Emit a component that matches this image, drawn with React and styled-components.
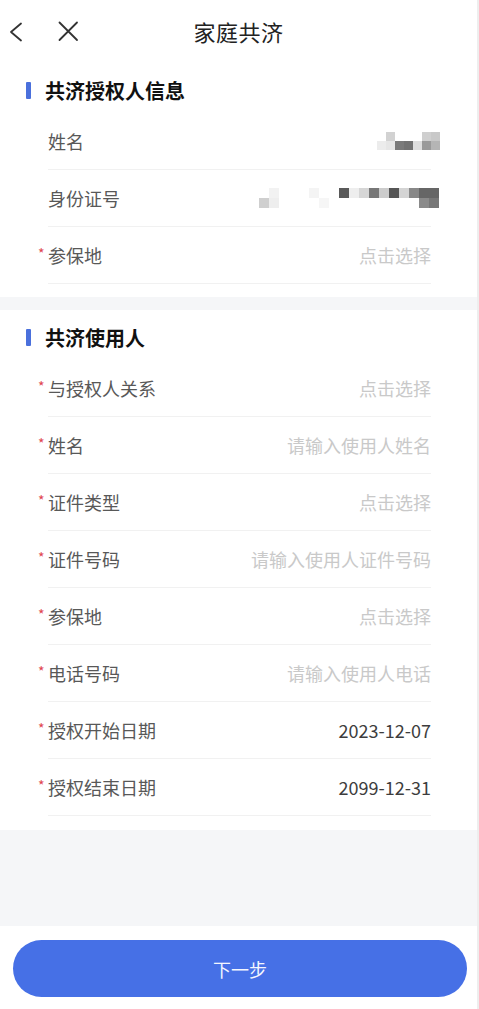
import React from 'react';
import styled, { createGlobalStyle } from 'styled-components';

const GlobalStyle = createGlobalStyle`
  body {
    margin: 0;
    background: #ffffff;
    font-family: "Noto Sans CJK SC", "Noto Sans", sans-serif;
  }
`;

const Page = styled.div`
  width: 479px;
  height: 1009px;
  box-sizing: border-box;
  border-right: 2px solid #eeeeee;
  display: flex;
  flex-direction: column;
  background: #ffffff;
  overflow: hidden;
`;

const Header = styled.div`
  height: 62px;
  display: grid;
  grid-template-columns: 1fr auto 1fr;
  align-items: center;
`;

const HeaderIcons = styled.div`
  display: flex;
  align-items: center;
  gap: 28px;
  padding-left: 4px;
  color: #333333;
`;

const Title = styled.div`
  font-size: 22px;
  color: #222222;
  letter-spacing: 0.5px;
`;

const Section = styled.div`
  background: #ffffff;
  padding-bottom: ${props => props.$bottom}px;
`;

const SectionTitle = styled.div`
  height: ${props => props.$h}px;
  box-sizing: border-box;
  padding-top: ${props => props.$top}px;
  display: flex;
  align-items: center;
  gap: 14px;
  padding-left: 26px;
  font-size: 20px;
  font-weight: 700;
  color: #111111;
`;

const Bar = styled.span`
  width: 5px;
  height: 17px;
  background: #4a70dc;
  border-radius: 1px;
`;

const Row = styled.div`
  height: 57px;
  box-sizing: border-box;
  margin: 0 46px 0 48px;
  border-bottom: 1px solid #f1f1f1;
  display: flex;
  align-items: center;
  justify-content: space-between;
`;

const Label = styled.div`
  font-size: 18px;
  color: #585858;
  display: flex;
  align-items: center;
`;

const Star = styled.span`
  width: 10px;
  margin-left: -10px;
  color: #e0454f;
  font-size: 14px;
  align-self: flex-start;
  margin-top: 1px;
`;

const Value = styled.div`
  font-size: 18px;
  color: ${props => (props.$placeholder ? '#c9c9c9' : '#3d3d3d')};
`;

const Gap = styled.div`
  height: ${props => props.$h}px;
  background: #f5f6f8;
`;

const Mosaic = styled.div`
  display: grid;
  grid-template-columns: repeat(${props => props.$cols}, ${props => props.$size}px);
  grid-auto-rows: ${props => props.$size}px;
  margin-right: ${props => props.$shift}px;
  filter: blur(0.6px);
`;

const Cell = styled.span`
  background: ${props => props.$c};
`;

const Footer = styled.div`
  flex: 1;
  display: flex;
  align-items: flex-start;
  padding-top: 14px;
  background: #ffffff;
`;

const NextButton = styled.button`
  width: 454px;
  height: 57px;
  margin-left: 13px;
  border: none;
  border-radius: 29px;
  background: #4670e6;
  color: #f4f6ff;
  font-family: inherit;
  font-size: 18px;
`;

const BackIcon = () => (
  <svg width="24" height="24" viewBox="0 0 24 24" fill="none">
    <path d="M17 4.5 L7 13 L17 21.5" stroke="currentColor" strokeWidth="1.8" strokeLinecap="round" strokeLinejoin="round" />
  </svg>
);

const CloseIcon = () => (
  <svg width="24" height="24" viewBox="0 0 24 24" fill="none">
    <path d="M3.5 3.5 L21 21 M21 3.5 L3.5 21" stroke="currentColor" strokeWidth="1.8" strokeLinecap="round" />
  </svg>
);

const W = 'transparent';

const nameBlocks = [
  [W, '#d2d2d2', W, W, W, '#cfcfcf', '#c8c8c8'],
  ['#ececec', '#e6e6e6', '#7a7a7a', '#727272', '#dedede', '#9a9a9a', '#b5b5b5'],
];

const idBlocks = [
  [W, '#f2f2f2', W, W, W, '#f4f4f4', W, W, '#595959', '#eeeeee', '#d6d6d6', '#777777', '#cccccc', '#555555', '#d4d4d4', '#888888', '#666666', '#666666'],
  ['#cfcfcf', '#eeeeee', W, W, W, W, '#f6f6f6', W, W, W, W, W, W, W, W, W, '#8a8a8a', '#777777'],
];

function Blur({ data, size, shift }) {
  return (
    <Mosaic $cols={data[0].length} $size={size} $shift={shift}>
      {data.flat().map((c, i) => <Cell key={i} $c={c} />)}
    </Mosaic>
  );
}

const grantorRows = [
  { label: '姓名', mosaic: 'name' },
  { label: '身份证号', mosaic: 'id' },
  { label: '参保地', required: true, value: '点击选择', placeholder: true },
];

const userRows = [
  { label: '与授权人关系', value: '点击选择', placeholder: true },
  { label: '姓名', value: '请输入使用人姓名', placeholder: true },
  { label: '证件类型', value: '点击选择', placeholder: true },
  { label: '证件号码', value: '请输入使用人证件号码', placeholder: true },
  { label: '参保地', value: '点击选择', placeholder: true },
  { label: '电话号码', value: '请输入使用人电话', placeholder: true },
  { label: '授权开始日期', value: '2023-12-07' },
  { label: '授权结束日期', value: '2099-12-31' },
];

function FormRow({ row }) {
  return (
    <Row>
      <Label>
        {row.required && <Star>*</Star>}
        {row.label}
      </Label>
      {row.mosaic === 'name' && <Blur data={nameBlocks} size={9} shift={-9} />}
      {row.mosaic === 'id' && <Blur data={idBlocks} size={10} shift={-8} />}
      {row.value && <Value $placeholder={row.placeholder}>{row.value}</Value>}
    </Row>
  );
}

export default function App() {
  return (
    <Page>
      <GlobalStyle />
      <Header>
        <HeaderIcons>
          <BackIcon />
          <CloseIcon />
        </HeaderIcons>
        <Title>家庭共济</Title>
        <div />
      </Header>

      <Section $bottom={13}>
        <SectionTitle $h={51} $top={5}>
          <Bar />
          共济授权人信息
        </SectionTitle>
        {grantorRows.map(row => <FormRow key={row.label} row={row} />)}
      </Section>

      <Gap $h={13} />

      <Section $bottom={14}>
        <SectionTitle $h={50} $top={4}>
          <Bar />
          共济使用人
        </SectionTitle>
        {userRows.map(row => <FormRow key={row.label} row={{ ...row, required: true }} />)}
      </Section>

      <Gap $h={96} />

      <Footer>
        <NextButton>下一步</NextButton>
      </Footer>
    </Page>
  );
}
